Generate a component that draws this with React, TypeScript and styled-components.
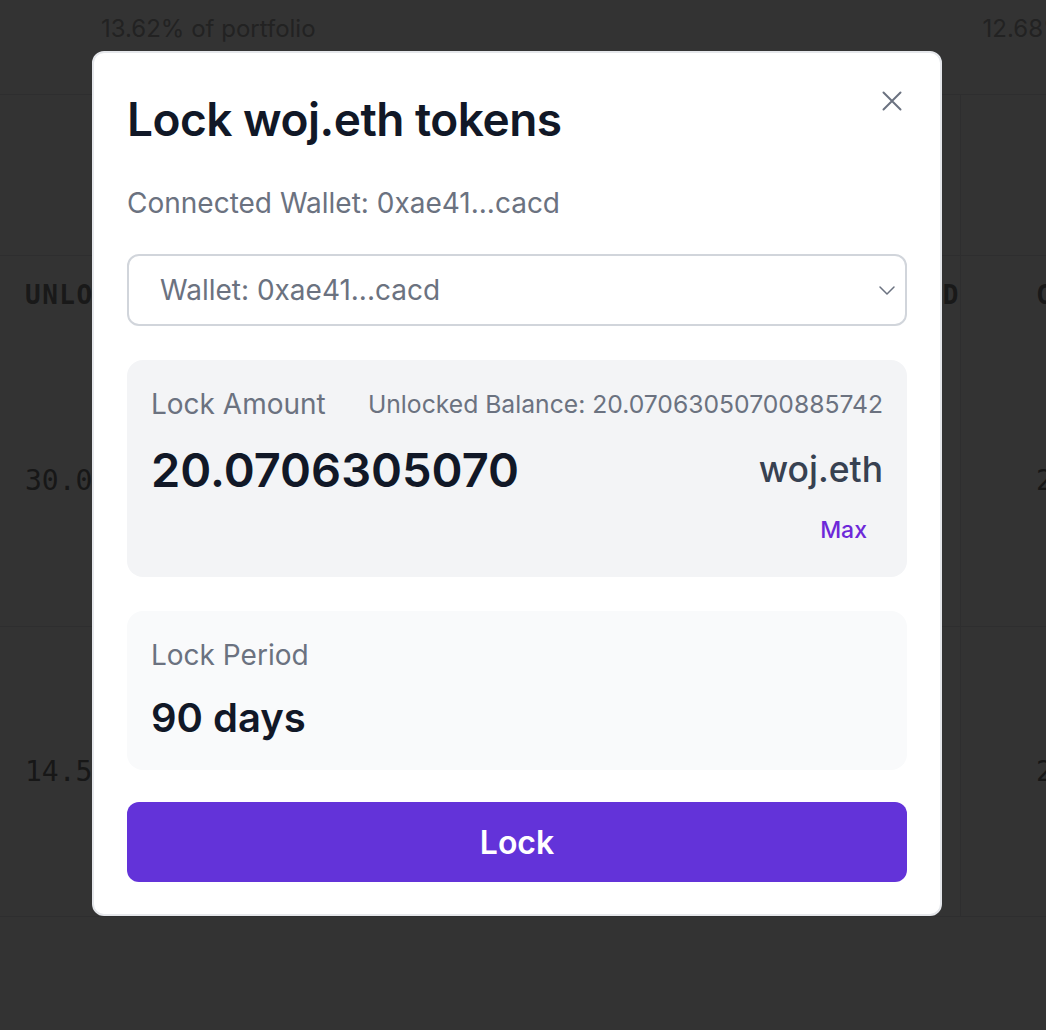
import styled, { createGlobalStyle } from "styled-components";

const GlobalStyle = createGlobalStyle`
  html, body {
    margin: 0;
    padding: 0;
    background: #ffffff;
    font-family: "Inter", "Noto Sans", sans-serif;
  }
  * {
    box-sizing: border-box;
  }
`;

// page behind the dialog
const Page = styled.div`
  width: 1046px;
  height: 1030px;
  overflow: hidden;
  background: #ffffff;
`;
const TopRow = styled.div`
  height: 95px;
  display: flex;
  align-items: flex-start;
  padding-top: 14px;
  border-bottom: 1px solid #e5e7eb;
`;
const Share = styled.span<{ $left: number }>`
  font-size: 24px;
  color: #a8a8a8;
  margin-left: ${(p) => p.$left}px;
  white-space: nowrap;
`;
const TableRow = styled.div<{ $h: number; $noLine?: boolean }>`
  height: ${(p) => p.$h}px;
  display: grid;
  grid-template-columns: 960px 1fr;
  border-bottom: ${(p) => (p.$noLine ? "none" : "1px solid #e5e7eb")};
`;
const Cell = styled.div<{ $head?: boolean; $line?: boolean }>`
  display: flex;
  align-items: center;
  padding-left: ${(p) => (p.$line ? 75 : 25)}px;
  border-left: ${(p) => (p.$line ? "1px solid #e5e7eb" : "none")};
  font-family: "DejaVu Sans Mono", monospace;
  font-size: ${(p) => (p.$head ? 26 : 28)}px;
  font-weight: ${(p) => (p.$head ? 700 : 400)};
  letter-spacing: ${(p) => (p.$head ? "1.5px" : "0")};
  color: ${(p) => (p.$head ? "#7c7c7c" : "#747474")};
  white-space: nowrap;
`;
const Spacer = styled.span`
  flex: 1;
`;

const Overlay = styled.div`
  position: fixed;
  inset: 0;
  background: rgba(0, 0, 0, 0.8);
`;

// dialog
const Modal = styled.div`
  position: fixed;
  left: 92px;
  top: 51px;
  width: 850px;
  height: 865px;
  background: #ffffff;
  border: 2px solid #e5e7eb;
  border-radius: 12px;
  padding: 38px 33px 32px;
  display: flex;
  flex-direction: column;
`;
const Header = styled.div`
  display: flex;
  justify-content: space-between;
  align-items: flex-start;
`;
const Title = styled.h2`
  margin: 0;
  font-size: 46px;
  line-height: 56px;
  font-weight: 600;
  color: #111827;
  letter-spacing: -0.5px;
`;
const CloseButton = styled.button`
  border: none;
  background: none;
  padding: 0;
  margin: -2px 3px 0 0;
  width: 24px;
  height: 24px;
  color: #6b7280;
  cursor: pointer;
`;
const Connected = styled.p`
  margin: 38px 0 0;
  font-size: 28px;
  line-height: 36px;
  color: #6b7280;
`;
const Select = styled.div`
  margin-top: 33px;
  height: 72px;
  border: 2px solid #d1d5db;
  border-radius: 12px;
  display: flex;
  align-items: center;
  justify-content: space-between;
  padding: 0 8px 0 31px;
  font-size: 28px;
  color: #6b7280;
`;
const Card = styled.div<{ $bg: string; $h: number }>`
  margin-top: 34px;
  height: ${(p) => p.$h}px;
  background: ${(p) => p.$bg};
  border-radius: 16px;
  padding: 26px 24px;
  display: flex;
  flex-direction: column;
`;
const Row = styled.div<{ $gap?: number }>`
  margin-top: ${(p) => p.$gap ?? 0}px;
  display: flex;
  justify-content: space-between;
  align-items: center;
`;
const Label = styled.span`
  font-size: 28px;
  line-height: 36px;
  color: #6b7280;
`;
const Balance = styled.span`
  font-size: 24.7px;
  color: #6b7280;
`;
const Amount = styled.span`
  font-size: 47px;
  font-weight: 600;
  line-height: 56px;
  color: #111827;
`;
const Symbol = styled.span`
  font-size: 35.5px;
  font-weight: 500;
  color: #374151;
`;
const MaxButton = styled.button`
  align-self: flex-end;
  margin-top: 18px;
  border: none;
  background: none;
  padding: 0 16px;
  font-family: inherit;
  font-size: 23px;
  line-height: 28px;
  font-weight: 500;
  color: #6d28d9;
  cursor: pointer;
`;
const Period = styled.span`
  margin-top: 21px;
  font-size: 40px;
  font-weight: 600;
  line-height: 48px;
  color: #111827;
`;
const LockButton = styled.button`
  margin-top: 32px;
  height: 80px;
  border: none;
  border-radius: 12px;
  background: #6333d9;
  color: #ffffff;
  font-family: inherit;
  font-size: 32px;
  font-weight: 600;
  cursor: pointer;
`;

export default function App() {
  return (
    <>
      <GlobalStyle />
      <Page>
        <TopRow>
          <Share $left={101}>13.62% of portfolio</Share>
          <Share $left={667}>12.68% of portfolio</Share>
        </TopRow>
        <TableRow $h={161}>
          <Cell />
          <Cell $line />
        </TableRow>
        <TableRow $h={78} $noLine>
          <Cell $head>
            UNLOCKED<Spacer />LOCKED
          </Cell>
          <Cell $head $line>
            CLAIM
          </Cell>
        </TableRow>
        <TableRow $h={293}>
          <Cell>30.000000</Cell>
          <Cell $line>2</Cell>
        </TableRow>
        <TableRow $h={290}>
          <Cell>14.500000</Cell>
          <Cell $line>2</Cell>
        </TableRow>
      </Page>
      <Overlay />
      <Modal>
        <Header>
          <Title>Lock woj.eth tokens</Title>
          <CloseButton aria-label="Close">
            <svg width="24" height="24" viewBox="0 0 24 24" fill="none" stroke="currentColor" strokeWidth="2" strokeLinecap="round">
              <path d="M3.5 3.5l17 17M20.5 3.5l-17 17" />
            </svg>
          </CloseButton>
        </Header>
        <Connected>Connected Wallet: 0xae41...cacd</Connected>
        <Select>
          <span>Wallet: 0xae41...cacd</span>
          <svg width="20" height="20" viewBox="0 0 20 20" fill="none" stroke="#6b7280" strokeWidth="1.5" strokeLinecap="round" strokeLinejoin="round">
            <path d="M3 7l7 7 7-7" />
          </svg>
        </Select>
        <Card $bg="#f3f4f6" $h={218}>
          <Row>
            <Label>Lock Amount</Label>
            <Balance>Unlocked Balance: 20.07063050700885742</Balance>
          </Row>
          <Row $gap={20}>
            <Amount>20.0706305070</Amount>
            <Symbol>woj.eth</Symbol>
          </Row>
          <MaxButton>Max</MaxButton>
        </Card>
        <Card $bg="#f9fafb" $h={159}>
          <Label>Lock Period</Label>
          <Period>90 days</Period>
        </Card>
        <LockButton>Lock</LockButton>
      </Modal>
    </>
  );
}
